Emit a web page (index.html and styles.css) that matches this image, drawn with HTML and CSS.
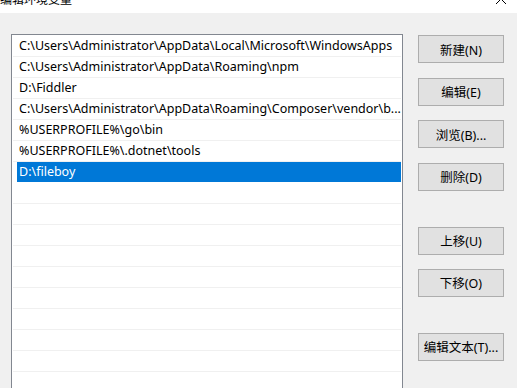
FILE: index.html
```html
<!DOCTYPE html>
<html lang="zh-CN">
<head>
  <meta charset="UTF-8">
  <title>编辑环境变量</title>
  <link rel="stylesheet" href="styles.css">
</head>
<body>

  <!-- Заголовок окна (обрезан сверху) -->
  <div class="titlebar">
    <span class="title">编辑环境变量</span>
    <svg class="close" width="12" height="12" viewBox="0 0 12 12">
      <path d="M1 1 L11 11 M11 1 L1 11" stroke="#000" stroke-width="1" fill="none"/>
    </svg>
  </div>

  <div class="dialog">
    <!-- Список путей -->
    <div class="path-list">
      <div class="row">C:\Users\Administrator\AppData\Local\Microsoft\WindowsApps</div>
      <div class="row">C:\Users\Administrator\AppData\Roaming\npm</div>
      <div class="row">D:\Fiddler</div>
      <div class="row">C:\Users\Administrator\AppData\Roaming\Composer\vendor\b...</div>
      <div class="row">%USERPROFILE%\go\bin</div>
      <div class="row">%USERPROFILE%\.dotnet\tools</div>
      <div class="row selected">D:\fileboy</div>
      <div class="row"></div>
      <div class="row"></div>
      <div class="row"></div>
      <div class="row"></div>
      <div class="row"></div>
      <div class="row"></div>
      <div class="row"></div>
      <div class="row"></div>
      <div class="row"></div>
      <div class="row"></div>
      <div class="row"></div>
    </div>

    <!-- Кнопки справа -->
    <div class="buttons">
      <div class="btn-group">
        <button class="btn">新建(N)</button>
        <button class="btn">编辑(E)</button>
        <button class="btn">浏览(B)...</button>
        <button class="btn">删除(D)</button>
      </div>
      <div class="btn-group">
        <button class="btn">上移(U)</button>
        <button class="btn">下移(O)</button>
      </div>
      <div class="btn-group">
        <button class="btn">编辑文本(T)...</button>
      </div>
    </div>
  </div>

</body>
</html>
```

FILE: styles.css
```css
/* Сброс */
* {
  margin: 0;
  padding: 0;
  box-sizing: border-box;
}
html, body {
  height: 100%;
  overflow: hidden;
}
body {
  font-family: "Noto Sans", "Noto Sans CJK SC", sans-serif;
  font-size: 12.5px;
  color: #000;
  background: #f0f0f0;
}

/* Заголовок окна */
.titlebar {
  height: 13px;
  background: #fff;
  display: flex;
  justify-content: space-between;
  overflow: hidden;
}
.title {
  font-family: "Noto Sans CJK SC", sans-serif;
  font-size: 12px;
  line-height: 12px;
  margin-top: -7px;
}
.close {
  margin-top: -7px;
  margin-right: 10px;
}

/* Основная область */
.dialog {
  display: flex;
  align-items: flex-start;
  padding: 21px 0 0 11px;
}

/* Список */
.path-list {
  width: 392px;
  height: 400px;
  background: #fff;
  border: 1px solid #828790;
  padding-top: 1px;
  overflow: hidden;
}
.row {
  height: 21px;
  margin: 0 1px;
  padding-left: 6px;
  border-bottom: 1px solid #f0f0f0;
  line-height: 20px;
  white-space: nowrap;
}
.row.selected {
  margin-left: 5px;
  padding-left: 2px;
  background: #0078d7;
  color: #fff;
  border-bottom-color: #fff;
}

/* Кнопки */
.buttons {
  margin-left: 15px;
  margin-top: 1px;
  display: flex;
  flex-direction: column;
  gap: 36px;
}
.btn-group {
  display: flex;
  flex-direction: column;
  gap: 14.67px;
}
.btn-group + .btn-group .btn + .btn {
  margin-top: -0.67px;
}
.btn {
  width: 86px;
  height: 28px;
  background: #e1e1e1;
  border: 1px solid #adadad;
  font-family: "Noto Sans", "Noto Sans CJK SC", sans-serif;
  font-size: 12.5px;
  color: #000;
}
```
